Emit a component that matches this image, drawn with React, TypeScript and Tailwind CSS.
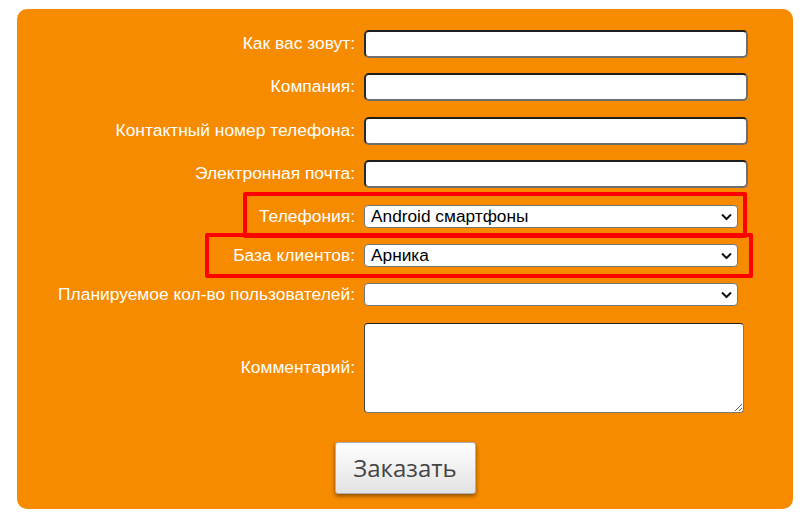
import React from "react";

const labelCls =
  "w-[347px] shrink-0 pr-[9px] text-right text-white text-[17.4px] leading-none font-['Liberation_Sans',Arial,sans-serif]";

const inputCls =
  "w-[384px] h-[28px] bg-white rounded-[5px] border-2 border-t-[#1e1e1e] border-l-[#2a2a2a] border-b-[#6e6e6e] border-r-[#6e6e6e] px-1 text-[16px] outline-none";

const Chevron = () => (
  <svg
    className="pointer-events-none absolute right-[6px] top-1/2 -translate-y-1/2"
    width="11"
    height="7"
    viewBox="0 0 11 7"
    fill="none"
  >
    <path d="M1 1l4.5 4.5L10 1" stroke="#111" strokeWidth="2" />
  </svg>
);

const Select = ({ value, options }: { value: string; options: string[] }) => (
  <div className="relative w-[374px] h-[23px]">
    <select
      defaultValue={value}
      className="appearance-none w-full h-full bg-white rounded-[4px] border border-[#767676] pl-[6px] pr-6 text-[17.3px] leading-none text-black font-['Liberation_Sans',Arial,sans-serif] outline-none"
    >
      {options.map((o) => (
        <option key={o} value={o}>
          {o}
        </option>
      ))}
    </select>
    <Chevron />
  </div>
);

const Row = ({ label, className, children }: { label: string; className: string; children: React.ReactNode }) => (
  <div className={"flex items-center " + className}>
    <label className={labelCls}>{label}</label>
    {children}
  </div>
);

export default function App() {
  return (
    <div className="relative w-[811px] h-[531px] bg-white pl-[17px] pt-[9px] font-['Liberation_Sans',Arial,sans-serif]">
      <form className="w-[776px] rounded-[10px] bg-[#f78b00] pt-[21px] pb-[15px] flex flex-col">
        <Row label="Как вас зовут:" className="">
          <input type="text" className={inputCls} />
        </Row>
        <Row label="Компания:" className="mt-[15px]">
          <input type="text" className={inputCls} />
        </Row>
        <Row label="Контактный номер телефона:" className="mt-[16px]">
          <input type="text" className={inputCls} />
        </Row>
        <Row label="Электронная почта:" className="mt-[15px]">
          <input type="text" className={inputCls} />
        </Row>
        <Row label="Телефония:" className="mt-[17px]">
          <Select value="Android смартфоны" options={["Android смартфоны", "iPhone"]} />
        </Row>
        <Row label="База клиентов:" className="mt-[16px]">
          <Select value="Арника" options={["Арника", "Другая"]} />
        </Row>
        <Row label="Планируемое кол-во пользователей:" className="mt-[16px]">
          <Select value="" options={["", "1-5", "5-10"]} />
        </Row>
        <Row label="Комментарий:" className="mt-[17px]">
          <textarea className="w-[380px] h-[90px] bg-white rounded-[4px] border border-t-[#222] border-l-[#444] border-b-[#777] border-r-[#777] p-1 text-[16px] outline-none" />
        </Row>
        <button
          type="button"
          className="mt-[29px] mx-auto w-[141px] h-[52px] rounded-[3px] border border-[#b0b0b0] bg-gradient-to-b from-white to-[#e2e2e2] shadow-[0_2px_4px_rgba(0,0,0,0.45)] text-[24px] text-[#444] font-['Open_Sans','DejaVu_Sans',sans-serif]"
        >
          Заказать
        </button>
      </form>

      {/* red annotation frames */}
      <div className="pointer-events-none absolute left-[243px] top-[192px] w-[504px] h-[46px] border-4 border-[#ff0000] rounded-[2px]" />
      <div className="pointer-events-none absolute left-[205px] top-[233px] w-[548px] h-[45px] border-4 border-[#ff0000] rounded-[2px]" />
    </div>
  );
}
